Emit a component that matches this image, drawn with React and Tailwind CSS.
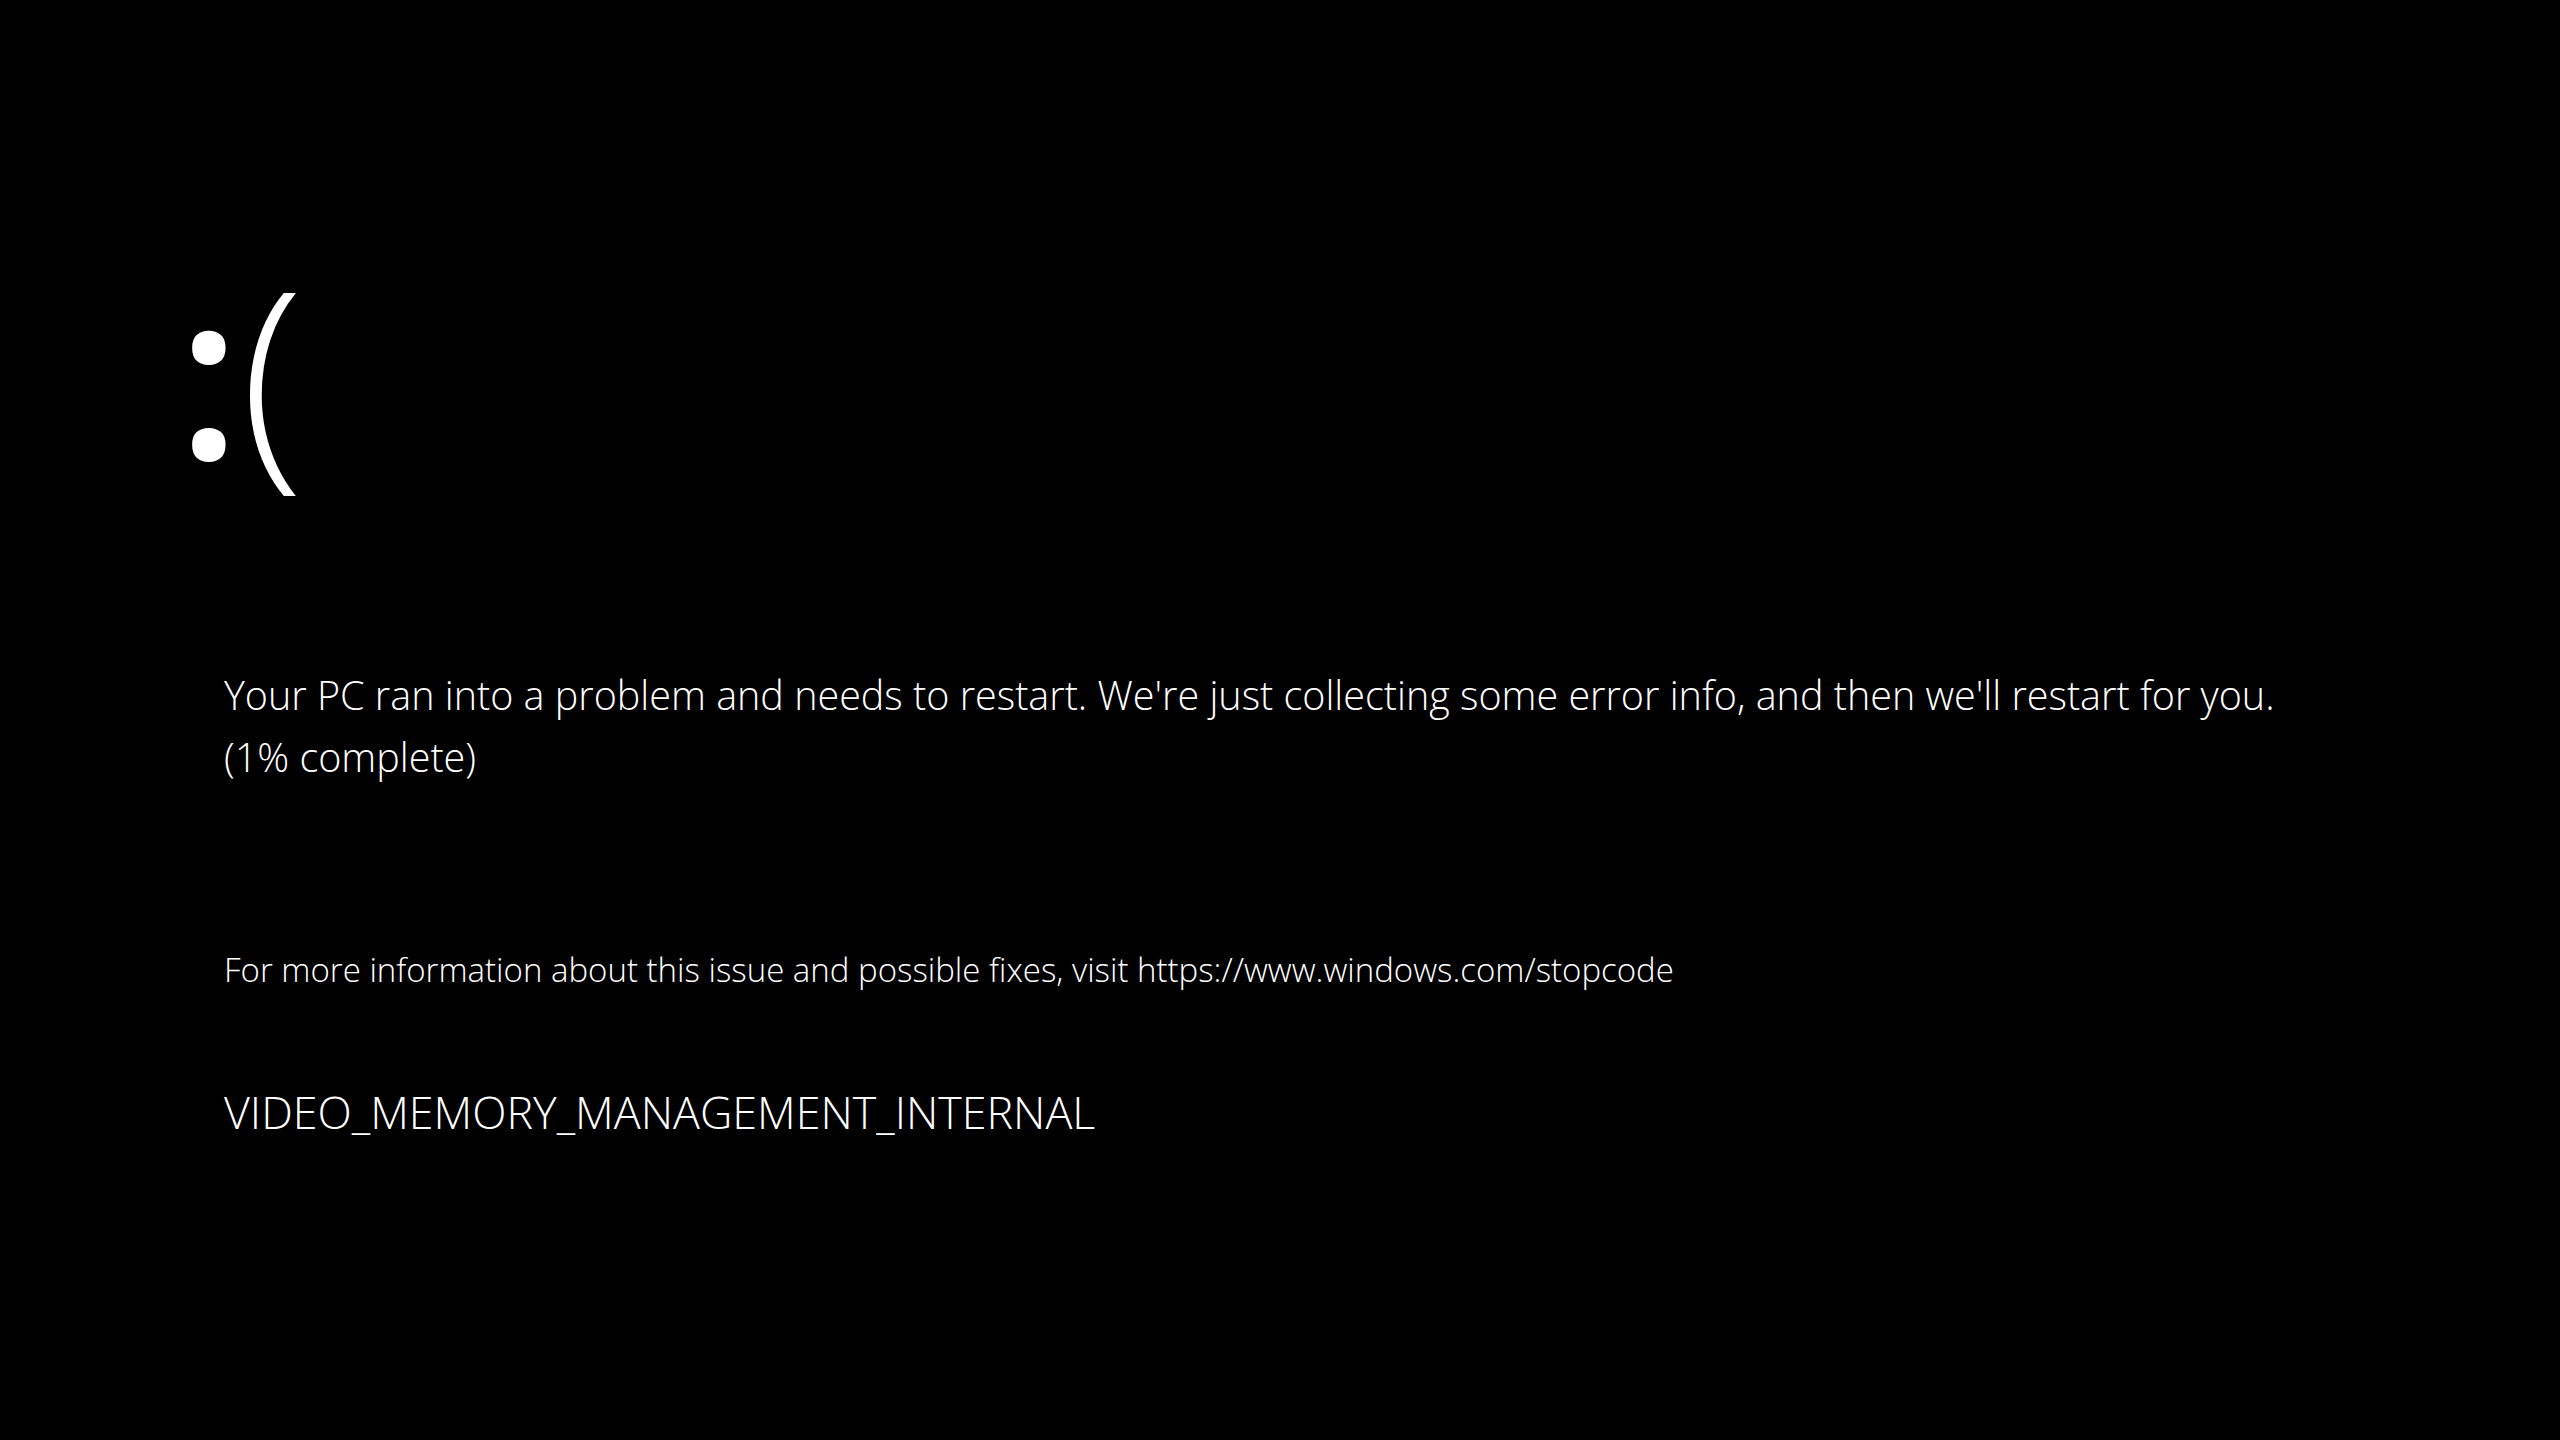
export default function App() {
  return (
    <div className="w-full h-screen bg-black text-white font-['Open_Sans',_'Noto_Sans',_sans-serif] font-light overflow-hidden">
      <div className="pl-[224px] pt-[230px]">
        {/* sad face */}
        <div className="h-[278px] text-[232px] leading-[278px] -ml-[47px] whitespace-nowrap">
          <span className="font-semibold">:</span>
          <span className="font-light">(</span>
        </div>
        <p className="mt-[156px] text-[39.5px] leading-[62px] max-w-[2250px]">
          Your PC ran into a problem and needs to restart. We're just collecting some error info, and then we'll restart for you.
          <br />
          (1% complete)
        </p>
        <p className="mt-[162px] text-[33px] leading-[40px] whitespace-nowrap">
          For more information about this issue and possible fixes, visit https://www.windows.com/stopcode
        </p>
        <p className="mt-[97px] text-[44.8px] leading-[50px] whitespace-nowrap">VIDEO_MEMORY_MANAGEMENT_INTERNAL</p>
      </div>
    </div>
  );
}
